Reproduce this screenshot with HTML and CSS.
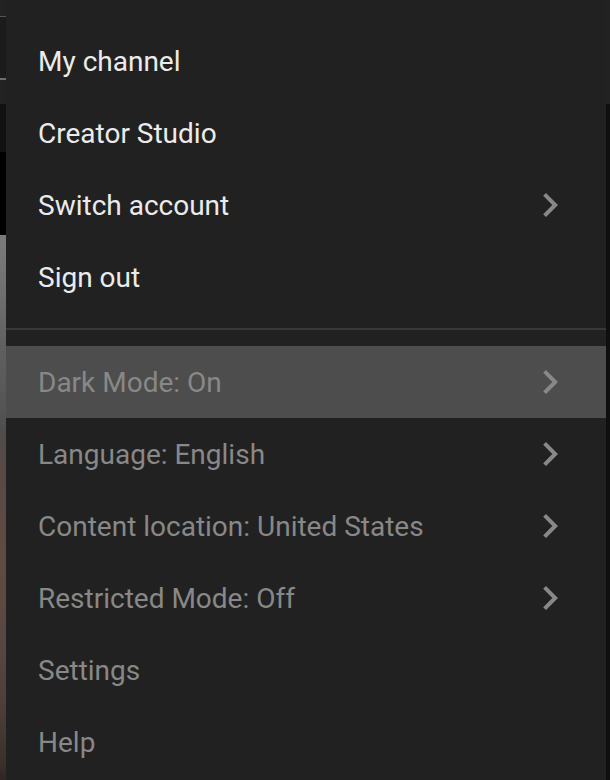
FILE: index.html
```html
<!DOCTYPE html>
<html lang="en">
<head>
<meta charset="utf-8">
<title>Account menu</title>
<link rel="stylesheet" href="styles.css">
</head>
<body>
<div class="scene">
  <div class="strip-left">
    <div class="seg seg-top"></div>
    <div class="seg seg-box"></div>
    <div class="seg seg-bar"></div>
    <div class="seg seg-dim"></div>
    <div class="seg seg-black"></div>
    <div class="seg seg-photo"></div>
  </div>
  <nav class="menu">
    <div class="group">
      <div class="item primary"><span class="label">My channel</span></div>
      <div class="item primary"><span class="label">Creator Studio</span></div>
      <div class="item primary"><span class="label">Switch account</span>
        <svg class="chev" viewBox="0 0 24 24"><path d="M10 6L8.59 7.41 13.17 12l-4.58 4.59L10 18l6-6z"/></svg>
      </div>
      <div class="item primary"><span class="label">Sign out</span></div>
    </div>
    <div class="divider"></div>
    <div class="group">
      <div class="item secondary active"><span class="label">Dark Mode: On</span>
        <svg class="chev" viewBox="0 0 24 24"><path d="M10 6L8.59 7.41 13.17 12l-4.58 4.59L10 18l6-6z"/></svg>
      </div>
      <div class="item secondary"><span class="label">Language: English</span>
        <svg class="chev" viewBox="0 0 24 24"><path d="M10 6L8.59 7.41 13.17 12l-4.58 4.59L10 18l6-6z"/></svg>
      </div>
      <div class="item secondary"><span class="label">Content location: United States</span>
        <svg class="chev" viewBox="0 0 24 24"><path d="M10 6L8.59 7.41 13.17 12l-4.58 4.59L10 18l6-6z"/></svg>
      </div>
      <div class="item secondary"><span class="label">Restricted Mode: Off</span>
        <svg class="chev" viewBox="0 0 24 24"><path d="M10 6L8.59 7.41 13.17 12l-4.58 4.59L10 18l6-6z"/></svg>
      </div>
      <div class="item secondary"><span class="label">Settings</span></div>
      <div class="item secondary"><span class="label">Help</span></div>
    </div>
  </nav>
  <div class="strip-right">
    <div class="seg rseg-top"></div>
    <div class="seg rseg-rest"></div>
  </div>
</div>
</body>
</html>
```

FILE: styles.css
```css
* { box-sizing: border-box; }
html, body {
  margin: 0;
  padding: 0;
  background: #0f0f0f;
  height: 100%;
  overflow: hidden;
}
.scene {
  display: grid;
  grid-template-columns: 6px 600px 4px;
  height: 780px;
  font-family: Roboto, "Noto Sans", "Liberation Sans", sans-serif;
}
.strip-left, .strip-right {
  display: flex;
  flex-direction: column;
}
.seg { flex: none; }
.seg-top { height: 16px; background: #222; }
.seg-box {
  height: 64px;
  background: #1b1b1b;
  border-top: 1px solid #555;
  border-bottom: 2px solid #6e6e6e;
}
.seg-bar { height: 24px; background: #222; }
.seg-dim { height: 48px; background: #111; }
.seg-black { height: 83px; background: #000; }
.seg-photo {
  flex: 1;
  background: linear-gradient(to bottom,
    #7b7b79 0px, #6f6f6d 60px, #606060 110px, #545656 170px,
    #4f4c4a 200px, #5a4943 240px, #5e4b43 330px, #574640 420px,
    #4a3d38 480px, #3a2f2b 530px, #2e2623 545px);
}
.rseg-top { height: 104px; background: #222; }
.rseg-rest { flex: 1; background: #0f0f0f; }

.menu {
  background: #212121;
  padding-top: 25px;
  display: flex;
  flex-direction: column;
}
.group { display: flex; flex-direction: column; }
.item {
  height: 72px;
  display: flex;
  align-items: center;
  justify-content: space-between;
  padding: 0 32px;
  font-size: 28px;
  line-height: 72px;
}
.label {
  line-height: 70px;
  padding-top: 2px;
}
.primary { color: #ebebeb; }
.secondary { color: #888888; }
.active { background: #4d4d4d; }
.chev {
  width: 48px;
  height: 48px;
  flex: none;
  fill: #888888;
}
.divider {
  height: 2px;
  background: #383838;
  margin: 15px 0 16px;
}
```
